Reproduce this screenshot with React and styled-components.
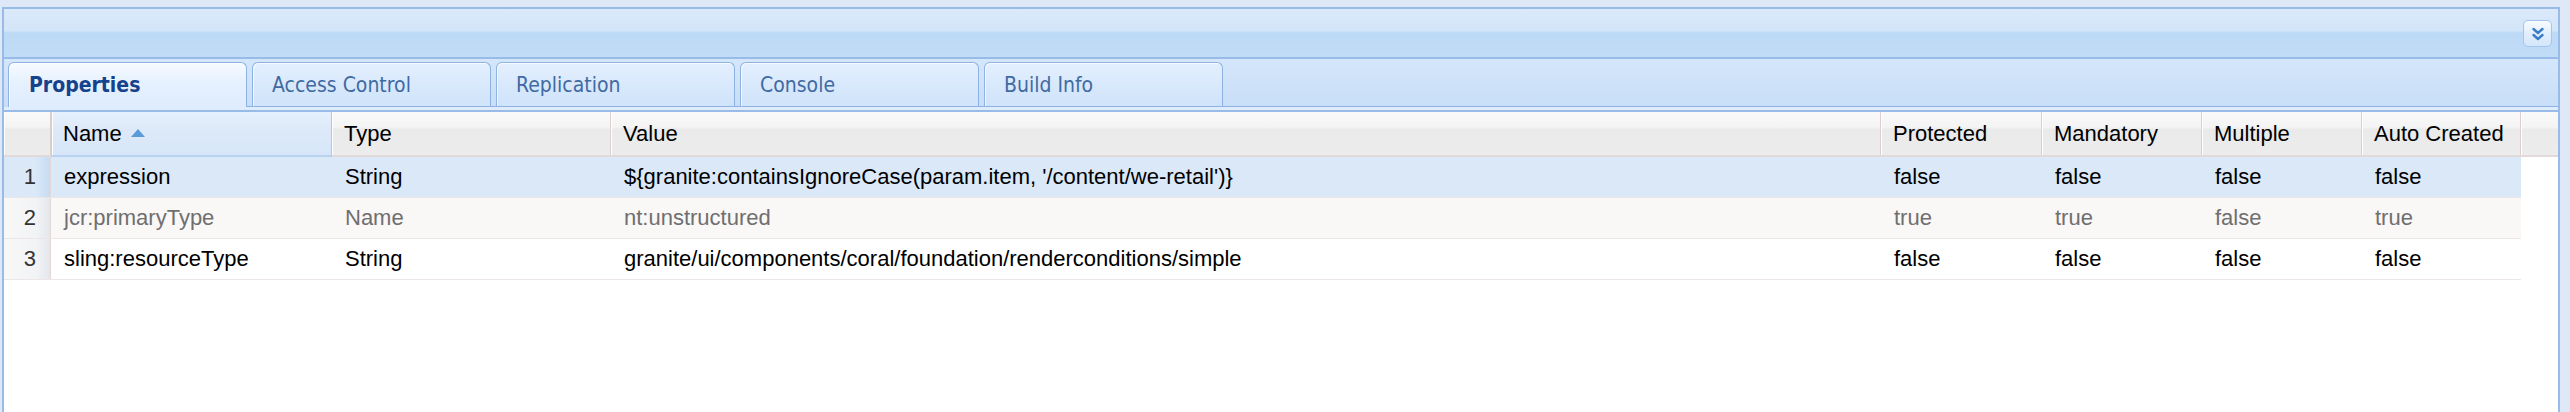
import React from "react";
import styled, { createGlobalStyle, css } from "styled-components";

const GlobalStyle = createGlobalStyle`
  html, body {
    margin: 0;
    padding: 0;
    height: 100%;
    background: #dfe8f6;
  }
  #root {
    height: 100%;
  }
`;

const COLS = "47px 281px 279px 1270px 161px 160px 160px 159px";

const columns = [
  { key: "name", label: "Name", sorted: true },
  { key: "type", label: "Type" },
  { key: "value", label: "Value" },
  { key: "prot", label: "Protected" },
  { key: "mand", label: "Mandatory" },
  { key: "mult", label: "Multiple" },
  { key: "auto", label: "Auto Created" },
];

const rows = [
  {
    name: "expression",
    type: "String",
    value: "${granite:containsIgnoreCase(param.item, '/content/we-retail')}",
    prot: "false",
    mand: "false",
    mult: "false",
    auto: "false",
    selected: true,
  },
  {
    name: "jcr:primaryType",
    type: "Name",
    value: "nt:unstructured",
    prot: "true",
    mand: "true",
    mult: "false",
    auto: "true",
    muted: true,
  },
  {
    name: "sling:resourceType",
    type: "String",
    value: "granite/ui/components/coral/foundation/renderconditions/simple",
    prot: "false",
    mand: "false",
    mult: "false",
    auto: "false",
  },
];

const tabs = ["Properties", "Access Control", "Replication", "Console", "Build Info"];

const Page = styled.div`
  height: 100%;
  box-sizing: border-box;
  padding: 7px 10px 0 2px;
  display: flex;
  flex-direction: column;
`;

const Panel = styled.div`
  flex: 1;
  display: flex;
  flex-direction: column;
  border: 2px solid #99bbe8;
  border-bottom: none;
  background: #fff;
`;

const TitleBar = styled.div`
  height: 48px;
  display: flex;
  align-items: center;
  justify-content: flex-end;
  padding-right: 6px;
  border-bottom: 2px solid #99bbe8;
  background: linear-gradient(
    to bottom,
    #dbe9fa 0%,
    #d3e5f9 45%,
    #bcd9f6 50%,
    #c1dcf6 100%
  );
`;

const CollapseButton = styled.div`
  width: 27px;
  height: 25px;
  margin-top: 1px;
  display: flex;
  align-items: center;
  justify-content: center;
  border: 1px solid #a3c4ec;
  border-radius: 5px;
  background: linear-gradient(to bottom, #f7fbff 0%, #e2eefc 50%, #d4e6fb 100%);
`;

const TabStrip = styled.div`
  padding: 3px 0 0 4px;
  background: linear-gradient(to bottom, #d4e6fa 0%, #c8def7 100%);
`;

const TabRow = styled.div`
  display: flex;
  gap: 5px;
  height: 44px;
  border-bottom: 1px solid #8db2e3;
`;

const Tab = styled.div`
  width: 239px;
  box-sizing: border-box;
  display: flex;
  align-items: center;
  padding-left: 19px;
  border: 1px solid #8db2e3;
  border-bottom: none;
  border-radius: 6px 6px 0 0;
  box-shadow: inset 1px 1px 0 rgba(255, 255, 255, 0.7);
  font-family: Tahoma, "DejaVu Sans Condensed", "DejaVu Sans", sans-serif;
  font-stretch: condensed;
  font-size: 21px;
  color: #416aa3;
  background: linear-gradient(to bottom, #e3effd 0%, #d9e9fc 50%, #cfe3fa 100%);
  ${(p) =>
    p.$active &&
    css`
      height: 45px;
      padding-left: 20px;
      font-weight: bold;
      color: #15428b;
      background: linear-gradient(to bottom, #f5faff 0%, #e6f1fe 45%, #deecfd 100%);
    `}
`;

const StripEdge = styled.div`
  height: 3px;
  background: #deecfd;
  border-bottom: 2px solid #99bbe8;
`;

const Grid = styled.div`
  flex: 1;
  background: #fff;
  font-family: "Liberation Sans", Arial, Helvetica, sans-serif;
  font-size: 22px;
`;

const HeaderRow = styled.div`
  display: grid;
  grid-template-columns: ${COLS} 1fr;
  height: 43px;
  border-bottom: 2px solid #e2dada;
  background: linear-gradient(to bottom, #f9f9f9 0%, #f4f4f4 35%, #eaeaea 40%, #ececec 100%);
`;

const HeaderCell = styled.div`
  display: flex;
  align-items: center;
  gap: 9px;
  padding-left: 12px;
  border-right: 1px solid #d9cfcf;
  box-shadow: inset 1px 0 0 #fff;
  color: #000;
  white-space: nowrap;
  ${(p) =>
    p.$sorted &&
    css`
      background: linear-gradient(to bottom, #e6f1fd 0%, #dde9f8 40%, #d6e6f8 100%);
      border-left: 1px solid #b8d2ef;
      border-right: 1px solid #a9c8ec;
      border-bottom: 2px solid #b8d2ef;
      margin-bottom: -2px;
      padding-left: 11px;
    `}
  ${(p) =>
    p.$filler &&
    css`
      border-right: none;
    `}
`;

const SortArrow = styled.svg`
  width: 14px;
  height: 8px;
  margin-top: -2px;
`;

const BodyRow = styled.div`
  display: grid;
  grid-template-columns: ${COLS};
  width: 2517px;
  height: 41px;
  box-sizing: border-box;
  border-bottom: 1px solid #ece6e6;
  background: ${(p) => (p.$selected ? "#dae8f8" : p.$muted ? "#faf7f7" : "#fff")};
  color: ${(p) => (p.$muted ? "#6f6f6f" : "#000")};
`;

const NumberCell = styled.div`
  display: flex;
  align-items: center;
  justify-content: flex-end;
  padding-right: 14px;
  color: #333;
  border-right: 1px solid #e4d7d7;
  background: ${(p) =>
    p.$selected
      ? "linear-gradient(to right, #dae8f8 0%, #dae8f8 70%, #c6dbf3 100%)"
      : "linear-gradient(to right, #f8f8f8 0%, #f2f3f5 70%, #e3e7ec 100%)"};
`;

const Cell = styled.div`
  display: flex;
  align-items: center;
  padding-left: 13px;
  white-space: nowrap;
  overflow: hidden;
`;

const DoubleChevron = () => (
  <svg width="16" height="16" viewBox="0 0 16 16">
    <path
      d="M3.5 3 L8 7 L12.5 3"
      fill="none"
      stroke="#3b7cc9"
      strokeWidth="2.4"
      strokeLinecap="round"
      strokeLinejoin="round"
    />
    <path
      d="M3.5 9 L8 13 L12.5 9"
      fill="none"
      stroke="#3b7cc9"
      strokeWidth="2.4"
      strokeLinecap="round"
      strokeLinejoin="round"
    />
  </svg>
);

export default function App() {
  return (
    <>
      <GlobalStyle />
      <Page>
        <Panel>
          <TitleBar>
            <CollapseButton>
              <DoubleChevron />
            </CollapseButton>
          </TitleBar>
          <TabStrip>
            <TabRow>
              {tabs.map((t, i) => (
                <Tab key={t} $active={i === 0}>
                  {t}
                </Tab>
              ))}
            </TabRow>
          </TabStrip>
          <StripEdge />
          <Grid>
            <HeaderRow>
              <HeaderCell />
              {columns.map((c) => (
                <HeaderCell key={c.key} $sorted={c.sorted}>
                  {c.label}
                  {c.sorted && (
                    <SortArrow viewBox="0 0 14 8">
                      <path d="M0 8 L7 0 L14 8 Z" fill="#5a9ad8" />
                    </SortArrow>
                  )}
                </HeaderCell>
              ))}
              <HeaderCell $filler />
            </HeaderRow>
            {rows.map((r, i) => (
              <BodyRow key={r.name} $selected={r.selected} $muted={r.muted}>
                <NumberCell $selected={r.selected}>{i + 1}</NumberCell>
                {columns.map((c) => (
                  <Cell key={c.key}>{r[c.key]}</Cell>
                ))}
              </BodyRow>
            ))}
          </Grid>
        </Panel>
      </Page>
    </>
  );
}
